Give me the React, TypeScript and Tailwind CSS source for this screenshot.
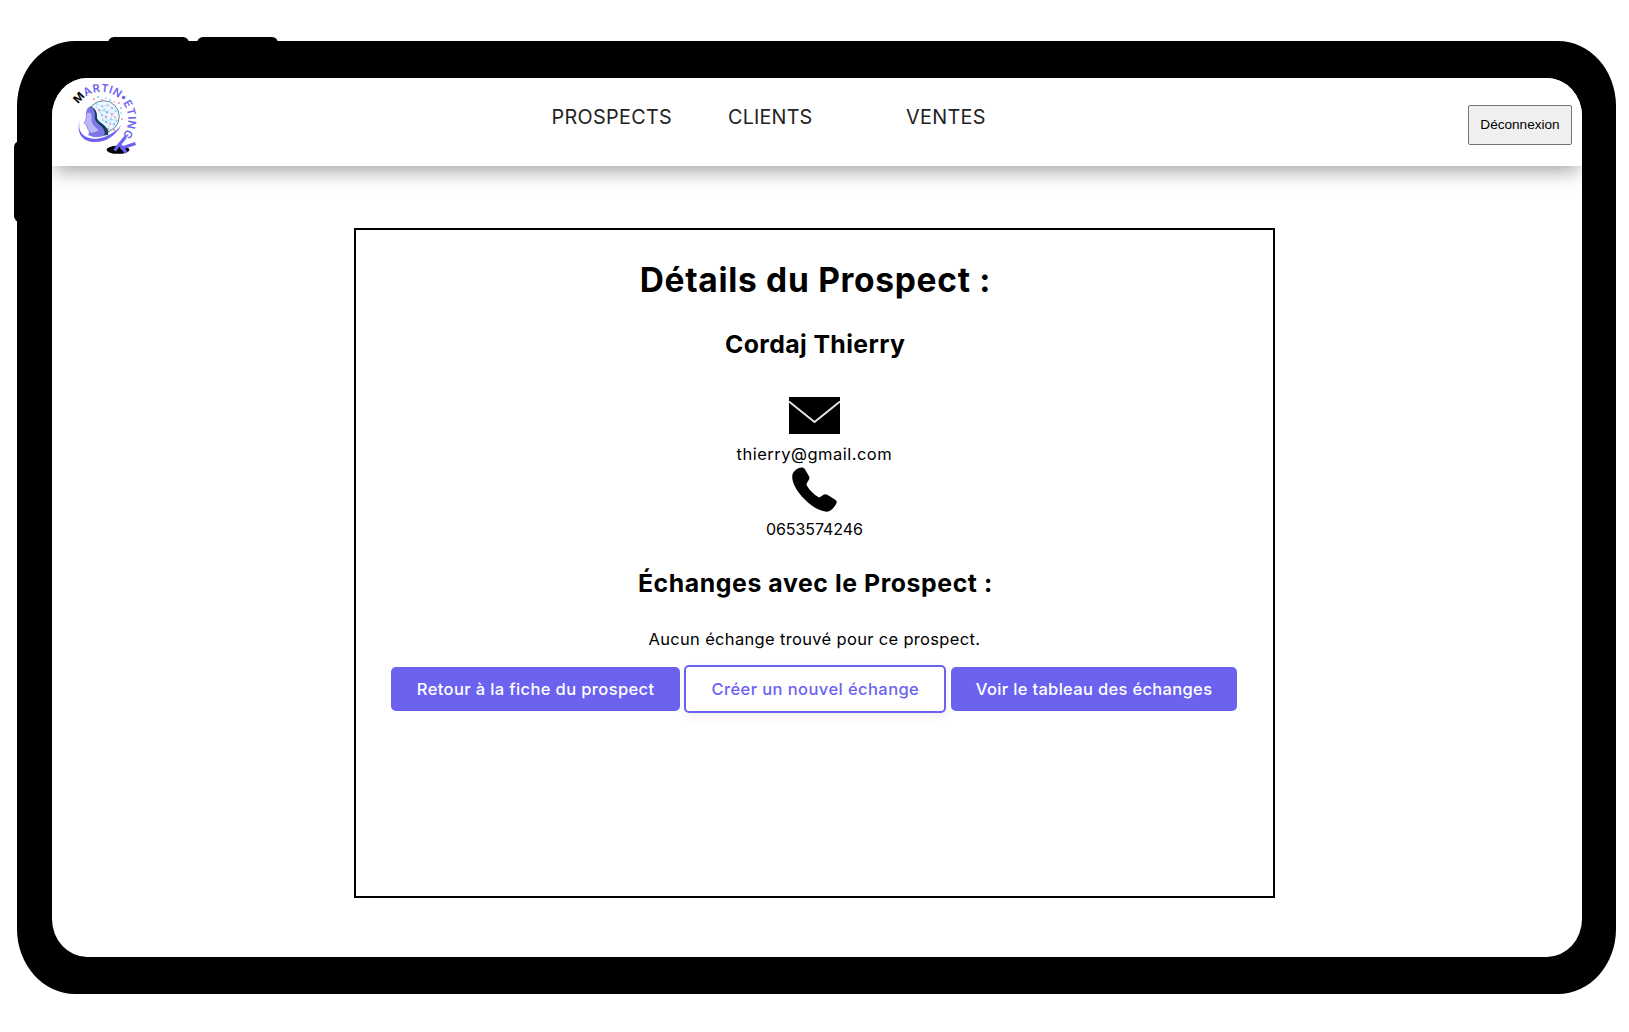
import React from "react";

const dots: [number, number, string][] = [
  [94, 99, "#ff5a78"], [98, 97, "#3da5ff"], [102, 100, "#ff4d6d"], [106, 98, "#7cc4ff"],
  [110, 100, "#3da5ff"], [114, 102, "#ff8fa3"], [119, 103, "#ff4d6d"], [121, 108, "#3da5ff"],
  [121, 113, "#7cc4ff"], [122, 119, "#ff4d6d"], [97, 104, "#7cc4ff"], [102, 106, "#5cb6ff"],
  [108, 105, "#ff8fa3"], [112, 108, "#5cb6ff"], [99, 110, "#ff5a78"], [104, 110, "#7cc4ff"],
  [107, 112, "#2196f3"], [112, 114, "#ff5a78"], [116, 111, "#7cc4ff"], [102, 115, "#5cb6ff"],
  [106, 117, "#ff4d6d"], [106, 122, "#2196f3"], [111, 119, "#7cc4ff"], [115, 117, "#ff8fa3"],
  [110, 124, "#ff8fa3"], [108, 129, "#ff4d6d"], [114, 124, "#5cb6ff"], [114, 130, "#ff5a78"],
  [117, 121, "#7cc4ff"], [103, 120, "#7cc4ff"],
];

function Logo() {
  return (
    <svg viewBox="70 78 70 80" className="h-20 w-[70px] shrink-0 overflow-visible" aria-label="Martin'eting">
      <defs>
        <path id="ring" d="M78.4 104.3 A27 27 0 1 1 120.1 138.1" />
      </defs>
      <circle cx="103.5" cy="116.5" r="15.8" fill="#eef7ff" stroke="#4c7c96" strokeWidth="0.9" />
      <path
        d="M96 106 102 115 99 110 107 112 102 106 108 105 112 108 107 112 112 114 116 111 112 108 M102 115 106 117 107 112 M106 117 106 122 111 119 112 114 115 117 117 121 111 119 110 124 106 122 103 120 102 115 M110 124 114 124 117 121 M110 124 108 129 114 130 114 124"
        fill="none"
        stroke="#9ad2f7"
        strokeWidth="0.6"
      />
      {dots.map(([x, y, c]) => (
        <circle key={`${x}-${y}`} cx={x} cy={y} r="0.85" fill={c} />
      ))}
      <path d="M89.5 106.5 C94 107 97.5 111 97 117 C97 121 101 122 105 126 C108 129 109 132 108 135 L93 137 Z" fill="#123f5c" />
      <path
        d="M88.5 107.5 C93 106.5 95.5 111 94.8 117 C94.5 121.5 98 123 102 127 C105 130 105.5 134 103.5 136 C98 138 92 137 88 135 C89.5 133 89 132 88.3 130.5 C87 128.5 86.5 127 86 125 L83.8 123.2 C84.3 121.5 85.6 120 85.8 118 C86 113.5 86 109.5 88.5 107.5Z"
        fill="#7d76e8"
      />
      <path d="M87 113 C91 112 92.5 115 91.5 119 C91 123 95 127 98.5 130 C95 133 91 134 89 131 L86.5 125 L84.2 123 L86.3 119Z" fill="#b9b5f7" />
      <path d="M80 121 C77 130 82 137 92 138.5 C103 140 115 133 121.5 125 C115 137 104 143 93 142 C81 141 76 131 80 121Z" fill="#6b63f0" />
      <text fontFamily="Inter, sans-serif" fontSize="11" fontWeight="600" fill="#6b63f0">
        <textPath href="#ring" textLength="87" lengthAdjust="spacing">
          <tspan fill="#000" fontWeight="700">M</tspan>ARTIN•ETING
        </textPath>
      </text>
      <ellipse cx="118" cy="149.8" rx="11.5" ry="4" fill="#000" />
      <path d="M125.5 137 L114.5 150.5 M119 143.5 L126 152.5 M120.5 148.5 L135.5 143.5" stroke="#6b63f0" strokeWidth="3.2" fill="none" />
    </svg>
  );
}

function Mail() {
  return (
    <svg viewBox="0 0 51 37" className="mt-[36.5px] h-[37px] w-[51px]">
      <rect width="51" height="37" fill="#000" />
      <path d="M0 4.5 25.5 25 51 4.5" fill="none" stroke="#e6e6e6" strokeWidth="1.9" />
    </svg>
  );
}

function Phone() {
  return (
    <svg viewBox="0 0 45 45" className="mt-[3px] h-[45px] w-[45px]">
      <path d="M9.5 .5 C11 .4 12 1 12.8 2 L17 9.3 C17.8 10.8 17.5 11.8 16.7 13 L14.8 16.3 C14.3 17.2 14.5 18.2 15.2 19.2 C18 23.5 22 27.5 26.3 30 C27 30.5 27.8 30.5 28.6 29.8 L31.5 27.8 C32.8 27 34 27 35.3 27.8 L43.3 32.7 C44.8 33.8 45 35 44.3 36.4 C42.5 40 40.5 42.3 38 43.8 C36.3 44.7 34.5 44.9 32 44.3 C25.5 42.8 19 38.8 12.3 32 C5.5 25 1.5 18.5 .4 12 C0 9 .3 7 1.5 5.2 C3.5 2.6 6 1 9.5 .5Z" fill="#000" />
    </svg>
  );
}

export default function App() {
  return (
    <div className="h-[1032px] w-[1629px] overflow-hidden bg-white pl-[13px] pt-[37px] font-[Inter,sans-serif] text-black">
      <div className="relative ml-1 mt-1 h-[953.4px] w-[1598.5px] rounded-[58px/65px] bg-black pb-[37.3px] pl-[34.5px] pr-[34px] pt-[37.3px]">
        <div className="absolute -top-1 left-[90.5px] h-3 w-[81px] rounded-t-[6px] bg-black" />
        <div className="absolute -top-1 left-[180px] h-3 w-[81px] rounded-t-[6px] bg-black" />
        <div className="absolute -left-[3.5px] top-[100px] h-[81px] w-3 rounded-l-[6px] bg-black" />

        <main className="flex h-full flex-col overflow-hidden rounded-[35px/38px] bg-white">
          <header className="flex h-[87.5px] shrink-0 items-start bg-white pl-[18.5px] pr-[10px] shadow-[0_8px_18px_-3px_rgba(0,0,0,0.36)]">
            <Logo />
            <nav className="ml-[411.5px] mt-[27px] flex text-[19.8px] leading-6 text-[#222]">
              <a className="w-[176.5px] tracking-[0.33px]">PROSPECTS</a>
              <a className="w-[178px] tracking-[0.18px]">CLIENTS</a>
              <a className="tracking-[0.34px]">VENTES</a>
            </nav>
            <button className="ml-auto mt-[26.5px] h-10 w-[104px] rounded-[2px] border border-[#767676] bg-[#efefef] pl-px font-['Liberation_Sans',sans-serif] text-[13.6px] text-black">
              Déconnexion
            </button>
          </header>

          <section className="ml-[302.4px] mt-[62.3px] flex h-[670px] w-[921px] shrink-0 flex-col items-center border-2 border-black">
            <h1 className="mt-[30px] pl-[2px] text-[33.5px] font-bold leading-10 tracking-[0.7px]">Détails du Prospect :</h1>
            <h2 className="mt-[28px] pl-[1.5px] text-[24.8px] font-bold leading-8 tracking-[0.4px]">Cordaj Thierry</h2>
            <Mail />
            <p className="mt-[10.5px] text-[16.5px] leading-5 tracking-[0.49px]">thierry@gmail.com</p>
            <Phone />
            <p className="mt-[7px] text-base leading-5 tracking-[-0.064px]">0653574246</p>
            <h2 className="mt-[28px] pl-[2px] text-[24.8px] font-bold leading-8 tracking-[0.59px]">Échanges avec le Prospect :</h2>
            <p className="mt-[30px] text-[16.5px] leading-5 tracking-[0.33px]">Aucun échange trouvé pour ce prospect.</p>
            <div className="mt-[16px] flex items-center gap-[4.5px] text-[16.5px] font-medium">
              <button className="h-11 w-[288.4px] whitespace-nowrap rounded-[5px] bg-[#6b63f0] tracking-[0.38px] text-white">
                Retour à la fiche du prospect
              </button>
              <button className="h-[48px] w-[262px] whitespace-nowrap rounded-[5px] border-2 border-[#6b63f0] bg-white tracking-[0.42px] text-[#6b63f0] shadow-[0_4px_8px_rgba(0,0,0,0.06)]">
                Créer un nouvel échange
              </button>
              <button className="h-11 w-[286.5px] whitespace-nowrap rounded-[5px] bg-[#6b63f0] tracking-[0.33px] text-white">
                Voir le tableau des échanges
              </button>
            </div>
          </section>
        </main>
      </div>
    </div>
  );
}
